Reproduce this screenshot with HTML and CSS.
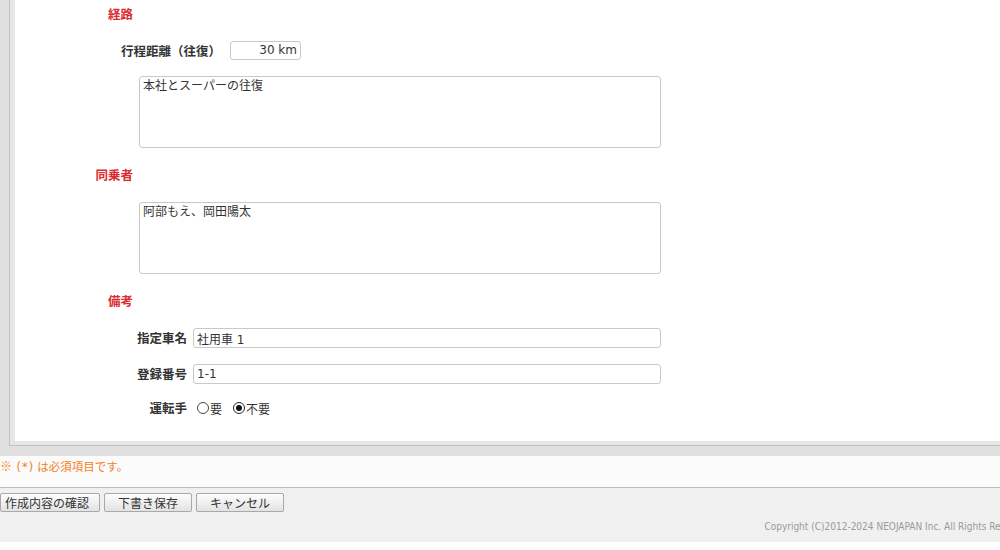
FILE: index.html
```html
<!DOCTYPE html>
<html lang="ja">
<head>
<meta charset="utf-8">
<link rel="stylesheet" href="styles.css">
</head>
<body>
<div class="page">
  <div class="main">
    <div class="frame">
      <div class="content">
        <div class="sec-head first"><span class="sec-title">経路</span></div>
        <div class="dist-row">
          <span class="dist-label">行程距離（往復）</span>
          <span class="dist-box">30 km</span>
        </div>
        <textarea class="memo memo-first" readonly>本社とスーパーの往復</textarea>
        <div class="sec-head"><span class="sec-title">同乗者</span></div>
        <textarea class="memo" readonly>阿部もえ、岡田陽太</textarea>
        <div class="sec-head"><span class="sec-title">備考</span></div>
        <div class="row">
          <span class="row-label">指定車名</span>
          <input class="text-input" type="text" value="社用車 1" readonly>
        </div>
        <div class="row row-gap">
          <span class="row-label">登録番号</span>
          <input class="text-input" type="text" value="1-1" readonly>
        </div>
        <div class="row row-radio">
          <span class="row-label">運転手</span>
          <div class="radios">
            <span class="radio"><span class="dot"></span>要</span>
            <span class="radio checked"><span class="dot"></span>不要</span>
          </div>
        </div>
      </div>
    </div>
  </div>
  <div class="note"><span class="mark">※</span> <span class="req">(*)</span>は必須項目です。</div>
  <div class="actions">
    <div class="buttons">
      <button class="btn btn-first" type="button">作成内容の確認</button>
      <button class="btn" type="button">下書き保存</button>
      <button class="btn" type="button">キャンセル</button>
    </div>
    <div class="copyright">Copyright (C)2012-2024 NEOJAPAN Inc. All Rights Reserved.</div>
  </div>
</div>
</body>
</html>
```

FILE: styles.css
```css
html, body {
  margin: 0;
  padding: 0;
  background: #ffffff;
  overflow: hidden;
}
body {
  width: 1000px;
  height: 550px;
  font-family: "DejaVu Sans", "Noto Sans CJK JP", sans-serif;
  font-size: 12px;
  color: #333333;
  text-spacing-trim: space-all;
}
.page {
  width: 1040px;
}
.main {
  background: #e0e0e0;
  padding: 0 0 10px 9px;
}
.frame {
  border-left: 1px solid #c2c2c2;
  border-bottom: 1px solid #c2c2c2;
  background: #e6e6e6;
  padding: 0 0 4px 5px;
}
.content {
  background: #ffffff;
  height: 441px;
  display: flex;
  flex-direction: column;
}
.sec-head {
  height: 54px;
  display: flex;
  align-items: center;
  flex: none;
}
.sec-head.first {
  height: 28px;
}
.sec-title {
  width: 118px;
  text-align: right;
  color: #db2a30;
  font-weight: bold;
  font-family: "Noto Sans CJK JP", sans-serif;
  font-size: 12.5px;
  margin-top: -1px;
}
.dist-row {
  margin-top: 13px;
  height: 19px;
  display: flex;
  align-items: center;
  flex: none;
}
.dist-label {
  width: 206px;
  text-align: right;
  font-weight: bold;
  font-size: 12.5px;
  font-family: "Noto Sans CJK JP", sans-serif;
  margin-right: 9px;
  margin-top: -1px;
}
.dist-box {
  box-sizing: border-box;
  width: 71px;
  height: 19px;
  border: 1px solid #c9c9c9;
  border-radius: 3px;
  text-align: right;
  padding-right: 3px;
  line-height: 17px;
}
.memo {
  box-sizing: border-box;
  display: block;
  flex: none;
  margin: 0 0 0 124px;
  width: 522px;
  height: 72px;
  border: 1px solid #c8c8c8;
  border-radius: 3px;
  padding: 1px 3px;
  resize: none;
  outline: none;
  font-family: "DejaVu Sans", "Noto Sans CJK JP", sans-serif;
  font-size: 12px;
  line-height: 16px;
  color: #333333;
  background: #ffffff;
}
.memo-first {
  margin-top: 16px;
}
.row {
  height: 20px;
  display: flex;
  align-items: center;
  flex: none;
}
.row-gap {
  margin-top: 16px;
}
.row-radio {
  margin-top: 14px;
}
.row-label {
  width: 172px;
  text-align: right;
  margin-right: 6px;
  margin-top: -2px;
  font-weight: bold;
  font-size: 12.5px;
  font-family: "Noto Sans CJK JP", sans-serif;
}
.text-input {
  box-sizing: border-box;
  width: 468px;
  height: 20px;
  margin: 0;
  border: 1px solid #c8c8c8;
  border-radius: 3px;
  padding: 0 3px;
  outline: none;
  font-family: "DejaVu Sans", "Noto Sans CJK JP", sans-serif;
  font-size: 12px;
  color: #333333;
  background: #ffffff;
}
.radios {
  display: flex;
  align-items: center;
  margin-left: 4px;
  gap: 11px;
  font-family: "Noto Sans CJK JP", sans-serif;
}
.radio {
  display: flex;
  align-items: center;
}
.dot {
  box-sizing: border-box;
  width: 12px;
  height: 12px;
  border: 1px solid #444444;
  border-radius: 50%;
  margin-right: 1px;
  display: flex;
  align-items: center;
  justify-content: center;
  background: #ffffff;
}
.radio.checked .dot {
  border-color: #222222;
}
.radio.checked .dot::after {
  content: "";
  width: 6px;
  height: 6px;
  border-radius: 50%;
  background: #111111;
}
.note {
  box-sizing: border-box;
  height: 32px;
  background: #fbfbfb;
  border-bottom: 1px solid #bcbcbc;
  color: #f67f1e;
  font-family: "Noto Sans CJK JP", sans-serif;
  font-size: 11.5px;
  padding-top: 2px;
  line-height: 16px;
}
.mark {
  font-size: 12px;
}
.req {
  font-family: "DejaVu Sans", sans-serif;
  letter-spacing: 1px;
  margin: 0 3px 0 2px;
}
.actions {
  height: 54px;
  background: #f0f0f0;
  display: flex;
  flex-direction: column;
}
.buttons {
  display: flex;
  gap: 4px;
  padding-top: 5px;
}
.btn {
  box-sizing: border-box;
  height: 19px;
  margin: 0;
  padding: 0;
  border: 1px solid #a9a9a9;
  border-radius: 2px;
  background: linear-gradient(#fdfdfd, #e3e3e3);
  font-family: "Noto Sans CJK JP", sans-serif;
  font-size: 12px;
  color: #333333;
  line-height: 17px;
  width: 88px;
  text-align: center;
}
.btn-first {
  width: 100px;
  text-align: left;
  padding-left: 4px;
}
.copyright {
  margin-top: auto;
  margin-bottom: 9px;
  text-align: right;
  padding-right: 6px;
  color: #9a9a9a;
  font-family: "DejaVu Sans Condensed", "Liberation Sans", sans-serif;
  font-size: 10px;
  line-height: 12px;
}
```
